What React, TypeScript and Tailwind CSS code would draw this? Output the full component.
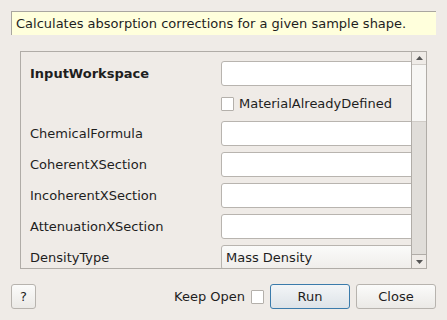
import { ReactNode } from 'react'

const rows: { label: string; bold?: boolean; kind: 'text' | 'check' | 'combo'; value?: string }[] = [
  { label: 'InputWorkspace', bold: true, kind: 'text' },
  { label: '', kind: 'check', value: 'MaterialAlreadyDefined' },
  { label: 'ChemicalFormula', kind: 'text' },
  { label: 'CoherentXSection', kind: 'text' },
  { label: 'IncoherentXSection', kind: 'text' },
  { label: 'AttenuationXSection', kind: 'text' },
  { label: 'DensityType', kind: 'combo', value: 'Mass Density' },
]

function Checkbox() {
  return <span className="block w-[13px] h-[14px] shrink-0 bg-white border border-[#b4b0ab] rounded-[1px]" />
}

function Button({ children, primary, className }: { children: ReactNode; primary?: boolean; className?: string }) {
  return (
    <button
      className={
        'h-[25px] rounded-[3px] border text-[13px] text-[#1e1e1e] ' +
        (primary
          ? 'border-[#3b7bab] bg-gradient-to-b from-[#f3f5f7] to-[#dde3e8] '
          : 'border-[#b7b3ae] bg-gradient-to-b from-[#fbfbfa] to-[#ebe9e6] ') +
        (className || '')
      }
    >
      {children}
    </button>
  )
}

export default function App() {
  return (
    <div className="w-[447px] h-[320px] bg-[#efebe7] text-[#1e1e1e] text-[13px] font-['DejaVu_Sans',sans-serif] flex flex-col overflow-hidden">
      {/* description */}
      <div className="mt-[11px] ml-[11px] w-[425px] h-[24px] bg-[#ffffdc] border-t border-l border-[#a9a6a0] flex items-center pl-[4px]">
        Calculates absorption corrections for a given sample shape.
      </div>

      {/* property list */}
      <div className="mt-[16px] ml-[20px] w-[407px] h-[218px] border border-[#b0aca7] flex">
        <div className="flex-1 overflow-hidden">
          <div className="pt-[9px] flex flex-col gap-[6px]">
            {rows.map((r, i) => (
              <div key={i} className={'flex items-center ' + (r.kind === 'check' ? 'h-[23px]' : 'h-[25px]')}>
                <div className={'w-[200px] shrink-0 pl-[9px] ' + (r.bold ? 'font-bold' : '')}>{r.label}</div>
                {r.kind === 'text' && (
                  <div className="w-[220px] h-[25px] shrink-0 bg-white border border-[#b8b4af] rounded-[3px]" />
                )}
                {r.kind === 'check' && (
                  <div className="flex items-center gap-[5px]">
                    <Checkbox />
                    <span>{r.value}</span>
                  </div>
                )}
                {r.kind === 'combo' && (
                  <div className="w-[220px] h-[25px] shrink-0 border border-[#b8b4af] rounded-[3px] bg-gradient-to-b from-[#fbfbfa] to-[#efedea] flex items-center pl-[4px]">
                    {r.value}
                  </div>
                )}
              </div>
            ))}
          </div>
        </div>

        {/* scrollbar */}
        <div className="w-[15px] border-l border-[#b0aca7] flex flex-col">
          <div className="h-[13px] bg-[#efebe7] border-b border-[#d0ccc7] flex items-center justify-center">
            <svg width="7" height="4" viewBox="0 0 7 4"><path d="M3.5 0 L7 4 L0 4 Z" fill="#555" /></svg>
          </div>
          <div className="h-[57px] bg-[#f7f6f4] border-b border-[#d0ccc7]" />
          <div className="flex-1 bg-[#e0ddd9]" />
          <div className="h-[14px] bg-[#efebe7] border-t border-[#b0aca7] flex items-center justify-center">
            <svg width="7" height="4" viewBox="0 0 7 4"><path d="M0 0 L7 0 L3.5 4 Z" fill="#555" /></svg>
          </div>
        </div>
      </div>

      {/* buttons */}
      <div className="mt-[15px] px-[11px] flex items-center">
        <Button className="w-[25px]">?</Button>
        <div className="flex-1" />
        <span className="mr-[6px]">Keep Open</span>
        <Checkbox />
        <Button primary className="ml-[6px] w-[80px]">Run</Button>
        <Button className="ml-[6px] w-[80px]">Close</Button>
      </div>
    </div>
  )
}
